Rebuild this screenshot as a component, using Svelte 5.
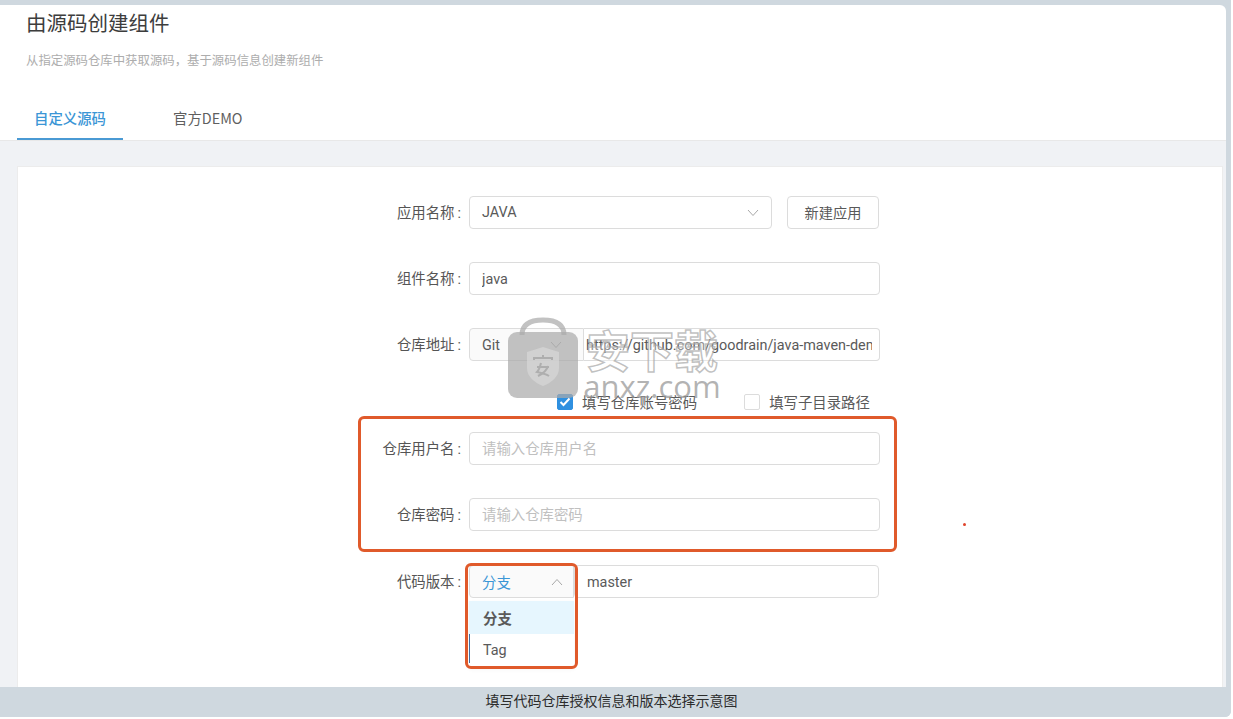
<script>
  const fields = [
    { label: '组件名称', value: 'java' }
  ];
</script>

<div class="page">
  <div class="frame">
    <header class="head">
      <h1>由源码创建组件</h1>
      <p>从指定源码仓库中获取源码，基于源码信息创建新组件</p>
      <nav class="tabs">
        <span class="tab active">自定义源码</span>
        <span class="tab">官方DEMO</span>
      </nav>
    </header>
    <main class="body">
      <section class="card">
        <form class="form">
          <div class="row">
            <span class="label">应用名称<b>:</b></span>
            <div class="control select grow"><span>JAVA</span>
              <svg width="12" height="8" viewBox="0 0 12 8"><path d="M1 1l5 5.500 5-5.500" /></svg>
            </div>
            <button type="button" class="btn">新建应用</button>
          </div>
          {#each fields as f}
            <div class="row">
              <span class="label">{f.label}<b>:</b></span>
              <input class="control grow" value={f.value} />
            </div>
          {/each}
          <div class="row">
            <span class="label">仓库地址<b>:</b></span>
            <div class="group">
              <div class="control select addon"><span>Git</span>
                <svg width="12" height="8" viewBox="0 0 12 8"><path d="M1 1l5 5.500 5-5.500" /></svg>
              </div>
              <input class="control url" value="https://github.com/goodrain/java-maven-demo.git" />
            </div>
          </div>
          <div class="checks">
            <span class="check"><i class="box on"><svg width="12" height="10" viewBox="0 0 12 10"><path d="M1.500 5l3 3 6-6.500" /></svg></i>填写仓库账号密码</span>
            <span class="check"><i class="box"></i>填写子目录路径</span>
          </div>
          <div class="row">
            <span class="label">仓库用户名<b>:</b></span>
            <input class="control grow" placeholder="请输入仓库用户名" />
          </div>
          <div class="row pw">
            <span class="label">仓库密码<b>:</b></span>
            <input class="control grow" placeholder="请输入仓库密码" />
          </div>
          <div class="row last">
            <span class="label">代码版本<b>:</b></span>
            <div class="version">
              <div class="control select branch"><span>分支</span>
                <svg width="12" height="8" viewBox="0 0 12 8"><path d="M1 7l5-5.500 5 5.500" /></svg>
              </div>
              <ul class="menu">
                <li class="picked">分支</li>
                <li class="tag">Tag</li>
              </ul>
              <input class="control master" value="master" />
            </div>
          </div>
        </form>
      </section>
    </main>
    <footer class="caption">填写代码仓库授权信息和版本选择示意图</footer>
  </div>

  <div class="mark mark-a"></div>
  <div class="mark mark-b"></div>
  <i class="dot"></i>

  <div class="wm">
    <svg class="bag" width="72" height="82" viewBox="0 0 72 82">
      <path class="handle" d="M15 18C15 7 24 3 36 3s21 4 21 15" />
      <rect x="1" y="15" width="70" height="66" rx="9" />
      <path class="shield" d="M36 30l16 5v16c0 9-8 15-16 18-8-3-16-9-16-18V35z" />
      <path class="sign" d="M36 38v3M27 43v-2h18v2M30 50h12M34 46c-1 4-2 7-4 9 5 1 9 2 12 4M41 49c-1 4-4 7-10 10" />
    </svg>
    <div class="wm-text">
      <span class="wm-cn">安下载</span>
      <span class="wm-en">anxz.com</span>
    </div>
  </div>
</div>

<style>
  :global(body) {
    margin: 0;
    background: #fff;
  }
  .page {
    position: relative;
    width: 1233px;
    height: 719px;
    overflow: hidden;
    background: #fff;
    font-family: "Noto Sans CJK SC", sans-serif;
    color: #595959;
  }
  .frame {
    box-sizing: border-box;
    width: 1231px;
    height: 717px;
    display: flex;
    flex-direction: column;
    background: #cfd8df;
    padding-top: 5px;
    border-radius: 0 0 6px 0;
  }
  .head {
    box-sizing: border-box;
    height: 136px;
    margin-right: 5px;
    background: #fff;
    border-bottom: 1px solid #e8e8e8;
    border-top-right-radius: 6px;
    padding-left: 26px;
    display: flex;
    flex-direction: column;
  }
  h1 {
    margin: 3px 0 0;
    font-size: 20.5px;
    line-height: 28px;
    font-weight: 400;
    color: #3d3d3d;
  }
  .head p {
    margin: 15px 0 0;
    font-size: 12.4px;
    line-height: 18px;
    color: #adadad;
  }
  .tabs {
    display: flex;
    margin: 26px 0 0 -9px;
    height: 45px;
  }
  .tab {
    box-sizing: border-box;
    padding: 11px 17px 0;
    width: 106px;
    margin-right: 33px;
    font-size: 14.4px;
    line-height: 24px;
    color: #5f5f5f;
    white-space: nowrap;
  }
  .tab.active {
    color: #3b96d6;
    font-weight: 500;
    border-bottom: 2px solid #4a9ad4;
  }
  .body {
    flex: 1;
    min-height: 0;
    margin-right: 5px;
    background: #f0f2f5;
    padding: 25px 3px 0 17px;
    overflow: hidden;
  }
  .card {
    height: 100%;
    background: #fff;
    border: 1px solid #ececec;
    border-bottom: 0;
    box-sizing: border-box;
    padding-top: 29px;
  }
  .form {
    width: 520px;
    margin: 0 auto;
  }
  .row {
    display: flex;
    align-items: center;
    height: 33px;
    margin-bottom: 33px;
  }
  .row.pw {
    margin-bottom: 34px;
  }
  .row.last {
    margin-bottom: 0;
  }
  .label {
    flex: none;
    box-sizing: border-box;
    width: 101px;
    margin-right: 2px;
    padding-bottom: 2px;
    text-align: right;
    white-space: nowrap;
    color: #555;
    font-size: 14.4px;
  }
  .label b {
    font-weight: 400;
    margin-left: 3px;
    font-family: Roboto, sans-serif;
  }
  .control {
    box-sizing: border-box;
    height: 33px;
    border: 1px solid #dcdcdc;
    border-radius: 4px;
    background: #fff;
    font-family: Roboto, "Noto Sans CJK SC", sans-serif;
    font-size: 14.4px;
    color: #5a5a5a;
    padding: 0 12px;
    outline: none;
    margin: 0;
  }
  input.control {
    padding-top: 1px;
  }
  input.control::placeholder {
    color: #c0c0c0;
    font-family: "Noto Sans CJK SC", sans-serif;
    opacity: 1;
  }
  .grow {
    flex: 1;
    min-width: 0;
    margin-left: 6px;
  }
  .select {
    display: flex;
    align-items: center;
    justify-content: space-between;
  }
  .select svg {
    flex: none;
    fill: none;
    stroke: #a8a8a8;
    stroke-width: 1;
  }
  .btn {
    box-sizing: border-box;
    flex: none;
    height: 33px;
    width: 92px;
    margin-left: 15px;
    border: 1px solid #dcdcdc;
    border-radius: 4px;
    background: #fff;
    color: #595959;
    font-family: "Noto Sans CJK SC", sans-serif;
    font-size: 14.2px;
    padding: 0 0 2px;
  }
  .row:first-child .grow {
    flex: 0 0 303px;
  }
  .group {
    display: flex;
    flex: 1;
    margin-left: 6px;
  }
  .addon {
    width: 115px;
    flex: none;
    border-radius: 4px 0 0 4px;
    background: #fafafa;
    padding: 1px 21px 0 12px;
  }
  input.url {
    flex: 1;
    min-width: 0;
    border-left: 0;
    border-radius: 0 4px 4px 0;
    padding: 1px 7px 0 2px;
  }
  .checks {
    display: flex;
    height: 20px;
    margin: -2px 0 20px 197px;
    font-size: 14.4px;
    line-height: 20px;
    gap: 47px;
    white-space: nowrap;
    color: #5a5a5a;
  }
  .check {
    display: flex;
    align-items: center;
    gap: 9px;
  }
  .box {
    box-sizing: border-box;
    width: 16px;
    height: 16px;
    border: 1px solid #dcdcdc;
    border-radius: 2px;
    background: #fff;
    display: flex;
    align-items: center;
    justify-content: center;
  }
  .box.on {
    background: #2f90e0;
    border-color: #2f90e0;
  }
  .box svg {
    fill: none;
    stroke: #fff;
    stroke-width: 2;
  }
  .version {
    position: relative;
    display: flex;
    flex: 1;
    margin-left: 6px;
  }
  .branch {
    flex: none;
    width: 105px;
    color: #3b96d6;
    background: #fafafa;
    border-radius: 4px 0 0 4px;
    font-family: "Noto Sans CJK SC", sans-serif;
    padding-right: 10px;
  }
  .master {
    flex: 1;
    min-width: 0;
    margin-right: 1px;
    padding-left: 12px;
  }
  .menu {
    position: absolute;
    left: 0;
    top: 36px;
    width: 105px;
    margin: 0;
    padding: 0;
    list-style: none;
    background: #fff;
    box-shadow: 0 2px 5px rgba(0, 0, 0, 0.05);
  }
  .menu li {
    height: 33px;
    line-height: 33px;
    padding-left: 14px;
    font-size: 14.4px;
    color: #5a5a5a;
    font-family: Roboto, "Noto Sans CJK SC", sans-serif;
  }
  .menu li.picked {
    background: #e6f6fe;
    font-weight: 700;
    font-family: "Noto Sans CJK SC", sans-serif;
  }
  .menu li.tag {
    position: relative;
  }
  .menu li.tag::before {
    content: "";
    position: absolute;
    left: 0;
    top: 0;
    width: 1px;
    height: 29px;
    background: #3f6fa5;
  }
  .caption {
    flex: none;
    height: 30px;
    line-height: 26px;
    text-align: center;
    font-size: 14px;
    color: #2c2c2c;
    background: #cfd8df;
    border-bottom-right-radius: 6px;
    margin-left: -8px;
  }
  .mark {
    position: absolute;
    box-sizing: border-box;
    border: 3px solid #e05a2b;
    border-radius: 6px;
    pointer-events: none;
  }
  .mark-a {
    left: 358px;
    top: 416px;
    width: 539px;
    height: 136px;
  }
  .mark-b {
    left: 465px;
    top: 563px;
    width: 113px;
    height: 106px;
  }
  .dot {
    position: absolute;
    left: 963px;
    top: 523px;
    width: 3px;
    height: 3px;
    border-radius: 50%;
    background: #e0442b;
  }
  .wm {
    position: absolute;
    left: 507px;
    top: 317px;
    display: flex;
    gap: 5px;
    pointer-events: none;
  }
  .bag rect {
    fill: rgba(170, 170, 170, 0.72);
  }
  .bag .handle {
    fill: none;
    stroke: rgba(170, 170, 170, 0.72);
    stroke-width: 5;
  }
  .bag .shield {
    fill: rgba(215, 215, 215, 0.7);
  }
  .bag .sign {
    fill: none;
    stroke: rgba(170, 170, 170, 0.9);
    stroke-width: 2;
  }
  .wm-text {
    display: flex;
    flex-direction: column;
    align-items: center;
    width: 136px;
  }
  .wm-cn {
    font-size: 44px;
    line-height: 46px;
    margin-top: 9px;
    font-weight: 700;
    color: rgba(255, 255, 255, 0.35);
    -webkit-text-stroke: 1.5px rgba(165, 165, 165, 0.7);
    white-space: nowrap;
  }
  .wm-en {
    font-family: "Open Sans", sans-serif;
    font-size: 31px;
    line-height: 26px;
    margin-top: 1px;
    color: rgba(150, 150, 150, 0.72);
    white-space: nowrap;
  }
</style>
